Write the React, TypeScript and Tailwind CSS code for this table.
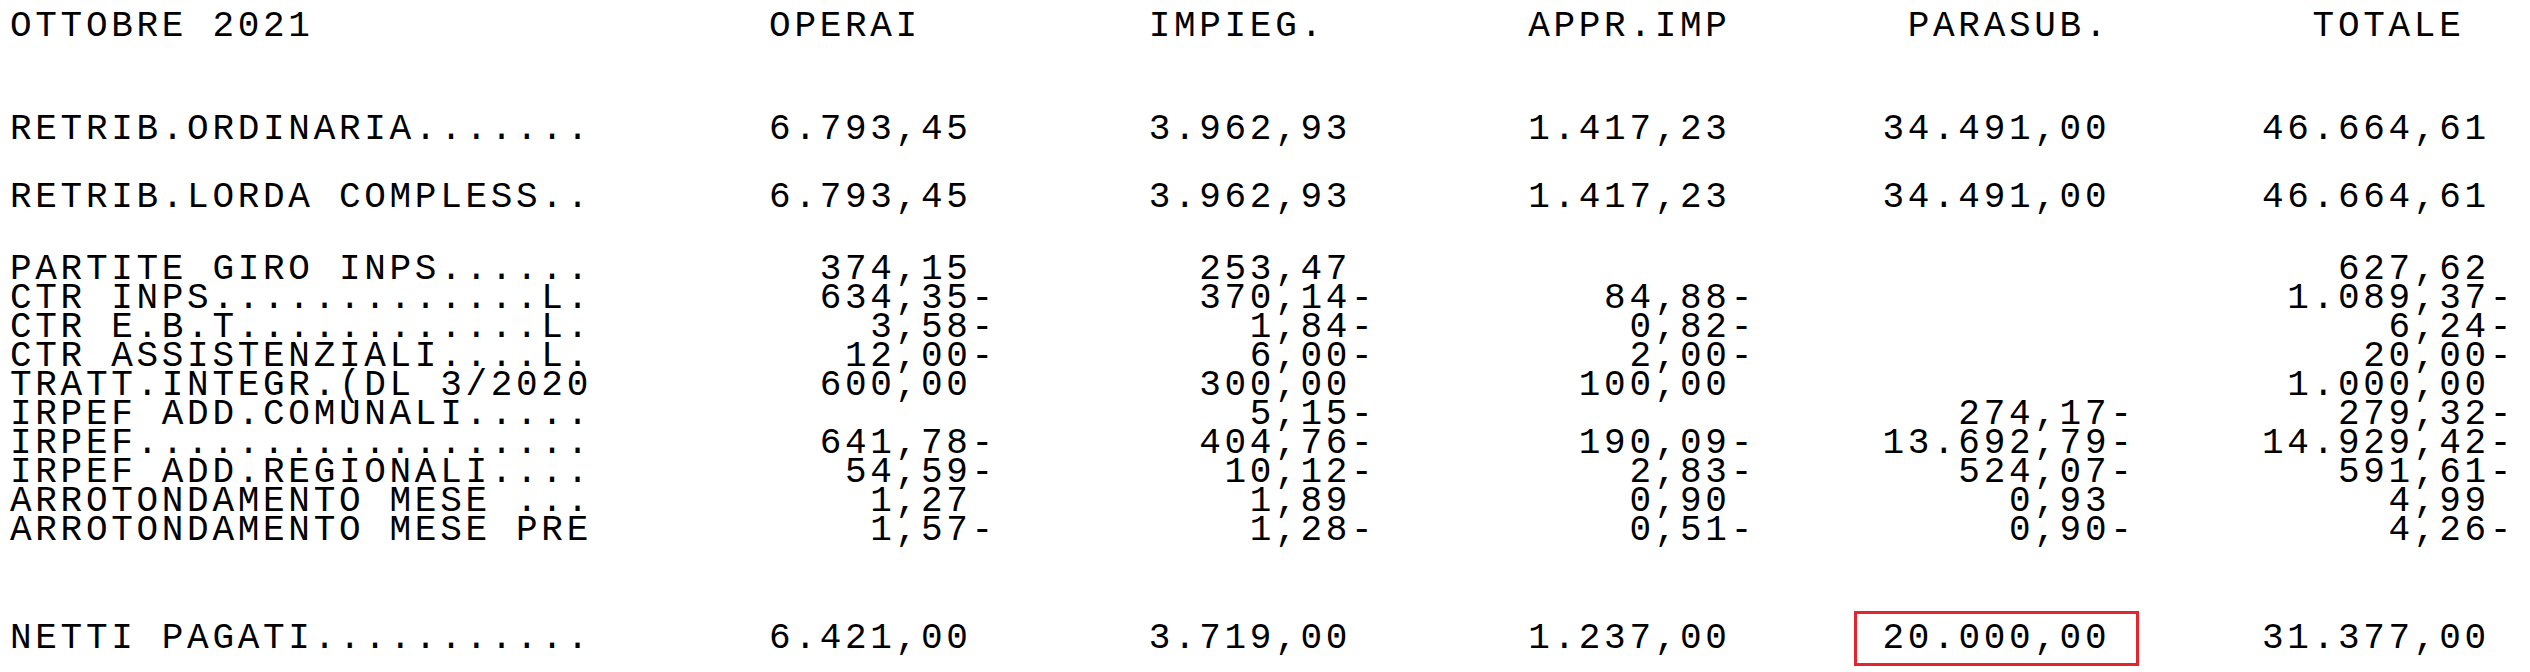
const HEADER =
  'OTTOBRE 2021'.padEnd(30) +
  'OPERAI'.padEnd(15) +
  'IMPIEG.'.padEnd(15) +
  'APPR.IMP'.padEnd(15) +
  'PARASUB.'.padEnd(16) +
  'TOTALE';

type Row = { label: string; vals: string[] };

const TOP_ROWS: Row[] = [
  { label: 'RETRIB.ORDINARIA.......', vals: ['6.793,45', '3.962,93', '1.417,23', '34.491,00', '46.664,61'] },
  { label: 'RETRIB.LORDA COMPLESS..', vals: ['6.793,45', '3.962,93', '1.417,23', '34.491,00', '46.664,61'] },
];

const DETAIL_ROWS: Row[] = [
  { label: 'PARTITE GIRO INPS......', vals: ['374,15', '253,47', '', '', '627,62'] },
  { label: 'CTR INPS.............L.', vals: ['634,35-', '370,14-', '84,88-', '', '1.089,37-'] },
  { label: 'CTR E.B.T............L.', vals: ['3,58-', '1,84-', '0,82-', '', '6,24-'] },
  { label: 'CTR ASSISTENZIALI....L.', vals: ['12,00-', '6,00-', '2,00-', '', '20,00-'] },
  { label: 'TRATT.INTEGR.(DL 3/2020', vals: ['600,00', '300,00', '100,00', '', '1.000,00'] },
  { label: 'IRPEF ADD.COMUNALI.....', vals: ['', '5,15-', '', '274,17-', '279,32-'] },
  { label: 'IRPEF..................', vals: ['641,78-', '404,76-', '190,09-', '13.692,79-', '14.929,42-'] },
  { label: 'IRPEF ADD.REGIONALI....', vals: ['54,59-', '10,12-', '2,83-', '524,07-', '591,61-'] },
  { label: 'ARROTONDAMENTO MESE ...', vals: ['1,27', '1,89', '0,90', '0,93', '4,99'] },
  { label: 'ARROTONDAMENTO MESE PRE', vals: ['1,57-', '1,28-', '0,51-', '0,90-', '4,26-'] },
];

const NETTI: Row = {
  label: 'NETTI PAGATI...........',
  vals: ['6.421,00', '3.719,00', '1.237,00', '20.000,00', '31.377,00'],
};

// fixed-width report line: amounts right aligned, trailing sign column
function formatLine(row: Row) {
  return (
    row.label +
    row.vals
      .map((v, i) => {
        const neg = v.endsWith('-');
        const num = neg ? v.slice(0, -1) : v;
        return num.padStart(i === 0 ? 15 : 14) + (neg ? '-' : ' ');
      })
      .join('')
  );
}

export default function App() {
  const netti = formatLine(NETTI);

  return (
    <div className="w-[2530px] h-[672px] bg-white overflow-hidden pl-[10px] pt-[12px] text-black whitespace-pre font-['Liberation_Mono',monospace] text-[36px] tracking-[3.7px] leading-[29px]">
      <div>{HEADER}</div>

      <div className="mt-[74px]">{formatLine(TOP_ROWS[0])}</div>
      <div className="mt-[39px]">{formatLine(TOP_ROWS[1])}</div>

      <div className="mt-[43px]">
        {DETAIL_ROWS.map((r) => (
          <div key={r.label}>{formatLine(r)}</div>
        ))}
      </div>

      <div className="mt-[66px]">
        {netti.slice(0, 73)}
        <span className="inline-block -mx-[3px] border-[3px] border-[#e3262d] leading-[49px]">
          {netti.slice(73, 84)}
        </span>
        {netti.slice(84)}
      </div>
    </div>
  );
}
